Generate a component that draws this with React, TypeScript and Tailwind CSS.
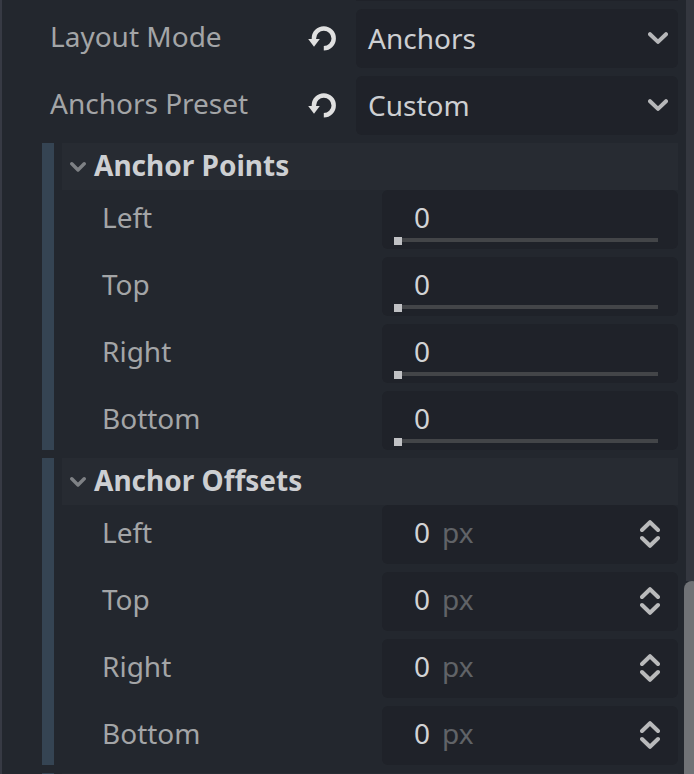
import React from 'react';

function ResetIcon() {
  return (
    <svg width="28" height="27" viewBox="0 0 28 27" className="shrink-0">
      <path d="M5.9 15V13.4A9.9 9.9 0 1 1 15.8 23.3" fill="none" stroke="#e0e0e0" strokeWidth="4.4" />
      <path d="M0.2 14H11.8L6 21.8Z" fill="#e0e0e0" />
    </svg>
  );
}

function Chevron() {
  return (
    <svg width="20" height="12" viewBox="0 0 20 12" className="shrink-0" fill="none" stroke="#b6b7b9" strokeWidth="4" strokeLinecap="round" strokeLinejoin="round">
      <path d="M2 2.2L10 9.9L18 2.2" />
    </svg>
  );
}

function Stepper() {
  return (
    <svg width="20" height="28" viewBox="0 0 20 28" className="shrink-0" fill="none" stroke="#b9babb" strokeWidth="4" strokeLinecap="round" strokeLinejoin="round">
      <path d="M2 10L10 2.2L18 10" />
      <path d="M2 18L10 25.8L18 18" />
    </svg>
  );
}

function SelectRow({ label, value }: { label: string; value: string }) {
  return (
    <div className="flex h-[59px] pl-[50px]">
      <span className="w-[258px] leading-[55px] text-[#a3a5a7]">{label}</span>
      <div className="w-12 pt-4">
        <ResetIcon />
      </div>
      <div className="flex flex-1 justify-between rounded-md bg-[#1f2229] pr-2.5 pl-3">
        <span className="leading-[59px] text-[#cdcfd2]">{value}</span>
        <div className="flex pt-[23px]">
          <Chevron />
        </div>
      </div>
    </div>
  );
}

function NumberRow({ label, slider }: { label: string; slider: boolean }) {
  return (
    <div className="flex h-[59px] pl-10">
      <span className="w-[280px] leading-[55px] text-[#a3a5a7]">{label}</span>
      {slider ? (
        <div className="flex flex-1 flex-col rounded-md bg-[#1f2229] pr-5 pl-3">
          <span className="h-[47px] pl-5 leading-[55px] text-[#d2d3d5]">0</span>
          <div className="flex">
            <div className="h-2 w-2 bg-[#c0c1c4]" />
            <div className="mt-px h-1 flex-1 bg-[#434548]" />
          </div>
        </div>
      ) : (
        <div className="flex flex-1 rounded-md bg-[#1f2229] pr-[18px] pl-8">
          <span className="leading-[55px] text-[#d2d3d5]">0</span>
          <span className="ml-3 flex-1 leading-[55px] text-[#606367]">px</span>
          <div className="flex pt-[15px]">
            <Stepper />
          </div>
        </div>
      )}
    </div>
  );
}

function Section({ title, slider }: { title: string; slider: boolean }) {
  return (
    <section className="-ml-0.5 flex pl-[42px]">
      <div className="w-3 shrink-0 bg-[#354453]" />
      <div className="ml-2 flex-1">
        <div className="flex h-[47px] bg-[#272b32] pl-2">
          <svg width="16" height="10" viewBox="0 0 16 10" className="mt-[19px] shrink-0" fill="none" stroke="#7e8185" strokeWidth="3.4" strokeLinecap="round" strokeLinejoin="round">
            <path d="M1.8 1.8L8 8L14.2 1.8" />
          </svg>
          <h2 className="ml-2 leading-[45px] font-bold text-[#cdcfd2]">{title}</h2>
        </div>
        <div className="flex flex-col gap-2">
          {['Left', 'Top', 'Right', 'Bottom'].map((label) => (
            <NumberRow key={label} label={label} slider={slider} />
          ))}
        </div>
      </div>
    </section>
  );
}

export default function App() {
  return (
    <main className="flex h-[774px] w-[694px] overflow-hidden border-l-2 border-[#373a44] bg-[#23272e] font-['Noto_Sans',sans-serif] text-[28px]">
      <div className="flex w-[676px] flex-col gap-2">
        <div className="ml-[354px] h-px shrink-0 bg-[#1f2229]" />
        <div className="-ml-0.5 flex flex-col gap-2">
          <SelectRow label="Layout Mode" value="Anchors" />
          <SelectRow label="Anchors Preset" value="Custom" />
        </div>
        <Section title="Anchor Points" slider />
        <Section title="Anchor Offsets" slider={false} />
        <div className="flex h-px shrink-0 pl-10">
          <div className="w-3 bg-[#354453]" />
          <div className="ml-2 flex-1 bg-[#272b32]" />
        </div>
      </div>
      <div className="flex flex-1 flex-col pl-1.5">
        <div className="ml-0.5 h-[581px] bg-[#34373f]" />
        <div className="-mr-1.5 flex-1 rounded-t-lg bg-[#707276]" />
      </div>
    </main>
  );
}
